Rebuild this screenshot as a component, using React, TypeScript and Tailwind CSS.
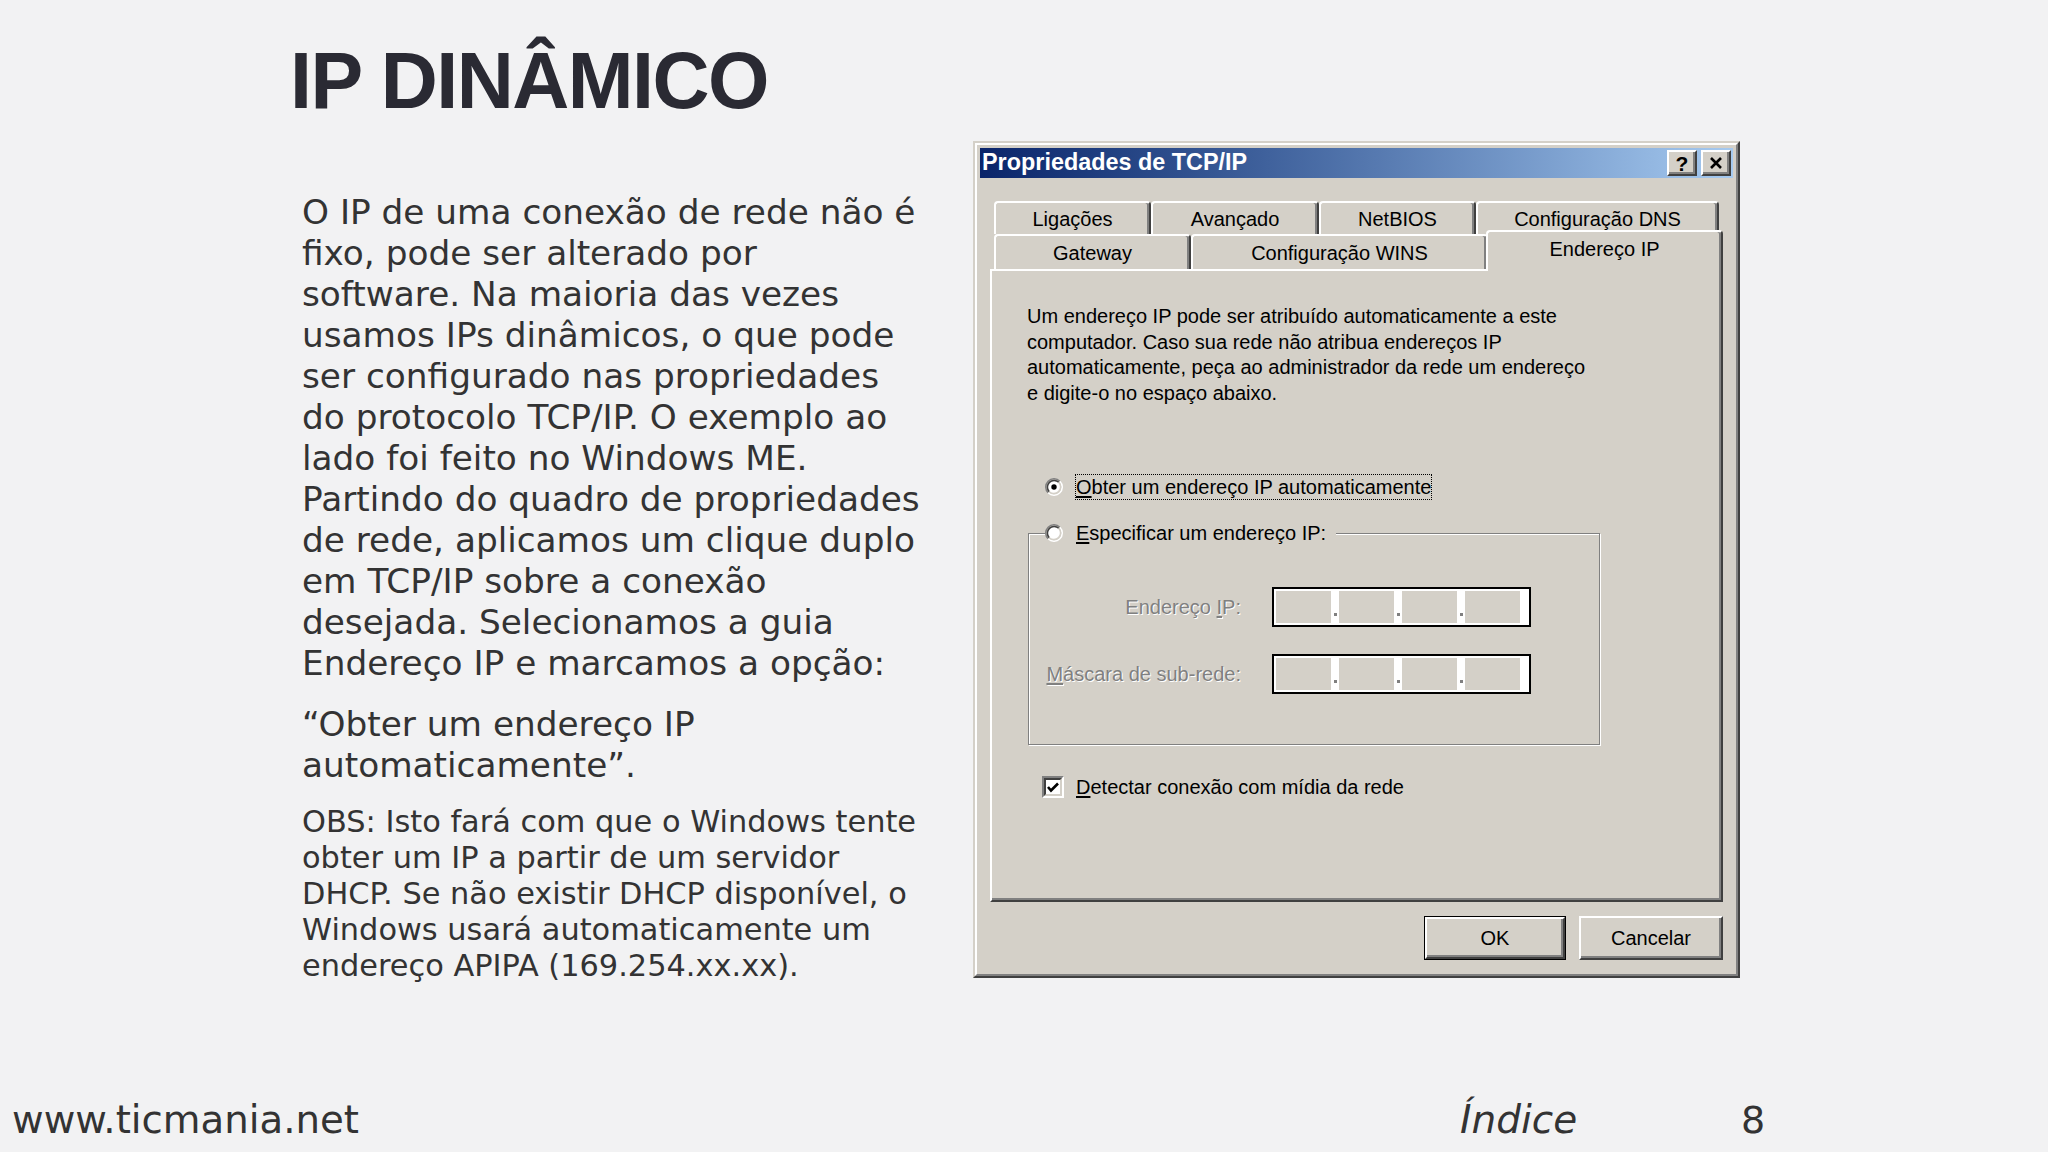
import React from 'react';

const win = "font-['Liberation_Sans',Arial,sans-serif]";
const body = "font-['DejaVu_Sans',Verdana,sans-serif]";

// Win2000-style raised edge
const raised =
  'border-2 border-t-white border-l-white border-r-[#404040] border-b-[#404040] shadow-[inset_-2px_-2px_0_#808080]';

const tabBase =
  'flex items-center justify-center bg-[#d4d0c8] border-t-2 border-l-2 border-r-2 border-t-white border-l-white border-r-[#404040] rounded-t-[4px] shadow-[inset_-2px_0_0_#808080] whitespace-nowrap';

const paragraph = [
  'O IP de uma conexão de rede não é',
  'fixo, pode ser alterado por',
  'software. Na maioria das vezes',
  'usamos IPs dinâmicos, o que pode',
  'ser configurado nas propriedades',
  'do protocolo TCP/IP. O exemplo ao',
  'lado foi feito no Windows ME.',
  'Partindo do quadro de propriedades',
  'de rede, aplicamos um clique duplo',
  'em TCP/IP sobre a conexão',
  'desejada. Selecionamos a guia',
  'Endereço IP e marcamos a opção:',
];

const obs = [
  'OBS: Isto fará com que o Windows tente',
  'obter um IP a partir de um servidor',
  'DHCP. Se não existir DHCP disponível, o',
  'Windows usará automaticamente um',
  'endereço APIPA (169.254.xx.xx).',
];

const dialogText = [
  'Um endereço IP pode ser atribuído automaticamente a este',
  'computador. Caso sua rede não atribua endereços IP',
  'automaticamente, peça ao administrador da rede um endereço',
  'e digite-o no espaço abaixo.',
];

function Radio({ checked = false }: { checked?: boolean }) {
  return (
    <svg width="18" height="18" viewBox="0 0 12 12" className="shrink-0">
      <circle cx="6" cy="6" r="4.2" fill="#fff" />
      <path d="M2.11 9.89 A5.5 5.5 0 0 1 9.89 2.11" fill="none" stroke="#808080" strokeWidth="1" />
      <path d="M9.89 2.11 A5.5 5.5 0 0 1 2.11 9.89" fill="none" stroke="#fff" strokeWidth="1" />
      <path d="M2.82 9.18 A4.5 4.5 0 0 1 9.18 2.82" fill="none" stroke="#404040" strokeWidth="1" />
      <path d="M9.18 2.82 A4.5 4.5 0 0 1 2.82 9.18" fill="none" stroke="#d4d0c8" strokeWidth="1" />
      {checked && <circle cx="6" cy="6" r="1.8" fill="#000" />}
    </svg>
  );
}

function IpBox() {
  return (
    <div className="ml-[31px] flex h-[40px] w-[259px] border-2 border-black bg-white p-[2px]">
      {[0, 1, 2, 3].map((i) => (
        <React.Fragment key={i}>
          {i > 0 && (
            <div className="flex w-[8px] items-end justify-center pb-[7px]">
              <div className="h-[3px] w-[3px] bg-[#808080]" />
            </div>
          )}
          <div className="h-full w-[55px] bg-[#d4d0c8]" />
        </React.Fragment>
      ))}
    </div>
  );
}

function Dialog() {
  return (
    <div className="w-[767px] shrink-0 border-2 border-t-[#d4d0c8] border-l-[#d4d0c8] border-r-[#404040] border-b-[#404040] bg-[#d4d0c8]">
      <div className={`border-2 border-t-white border-l-white border-r-[#808080] border-b-[#808080] p-[3px] ${win} text-black`}>
        {/* title bar */}
        <div className="flex h-[30px] items-center bg-gradient-to-r from-[#0a246a] to-[#a6caf0] pl-[2px] pr-[2px]">
          <span className="text-[23.4px] font-bold leading-none text-white">Propriedades de TCP/IP</span>
          <div className="ml-auto flex gap-[4px]">
            <div className={`flex h-[26px] w-[30px] items-center justify-center bg-[#d4d0c8] ${raised}`}>
              <span className="text-[21px] font-bold leading-none">?</span>
            </div>
            <div className={`flex h-[26px] w-[30px] items-center justify-center bg-[#d4d0c8] ${raised}`}>
              <svg width="14" height="12" viewBox="0 0 14 12">
                <path d="M2 1 L12 11 M12 1 L2 11" stroke="#000" strokeWidth="2.6" />
              </svg>
            </div>
          </div>
        </div>

        <div className="pl-[10px]">
          {/* tabs */}
          <div className="mt-[23px] ml-[4px] flex h-[33px] text-[20px]">
            <div className={`${tabBase} w-[157px]`}>Ligações</div>
            <div className={`${tabBase} w-[168px]`}>Avançado</div>
            <div className={`${tabBase} w-[157px]`}>NetBIOS</div>
            <div className={`${tabBase} w-[243px]`}>Configuração DNS</div>
          </div>
          <div className="ml-[4px] flex h-[35px] items-start text-[20px]">
            <div className={`${tabBase} h-[35px] w-[197px]`}>Gateway</div>
            <div className={`${tabBase} h-[35px] w-[297px]`}>Configuração WINS</div>
            <div className={`${tabBase} relative z-10 -mx-[2px] -mt-[4px] h-[41px] w-[237px] pb-[6px]`}>Endereço IP</div>
          </div>

          {/* panel */}
          <div className={`h-[633px] w-[733px] bg-[#d4d0c8] text-[20px] ${raised}`}>
            <div className="pl-[35px] pt-[33px] leading-[25.5px]">
              {dialogText.map((l) => (
                <div key={l} className="whitespace-nowrap">{l}</div>
              ))}
            </div>

            <div className="mt-[67px] ml-[53px] flex h-[28px] items-center">
              <Radio checked />
              <span className="ml-[12px] whitespace-nowrap border border-dotted border-black leading-[24px]">
                <span className="underline underline-offset-2">O</span>bter um endereço IP automaticamente
              </span>
            </div>

            <fieldset className="mt-[18px] ml-[36px] w-[572px] border border-[#808080] pb-[50px] shadow-[inset_1px_1px_0_#fff,1px_1px_0_#fff]">
              <legend className="ml-[16px] bg-[#d4d0c8] pr-[9px]">
                <div className="flex h-[28px] items-center">
                  <Radio />
                  <span className="ml-[12px] whitespace-nowrap border border-transparent leading-[24px]">
                    <span className="underline underline-offset-2">E</span>specificar um endereço IP:
                  </span>
                </div>
              </legend>
              <div className="mt-[40px] flex items-center">
                <div className="w-[212px] text-right whitespace-nowrap text-[#808080] [text-shadow:1px_1px_0_#fff]">
                  Endereço <span className="underline underline-offset-2">I</span>P:
                </div>
                <IpBox />
              </div>
              <div className="mt-[27px] flex items-center">
                <div className="w-[212px] text-right whitespace-nowrap text-[#808080] [text-shadow:1px_1px_0_#fff]">
                  <span className="underline underline-offset-2">M</span>áscara de sub-rede:
                </div>
                <IpBox />
              </div>
            </fieldset>

            <div className="mt-[31px] ml-[50px] flex h-[22px] items-center">
              <div className="h-[22px] w-[22px] border-2 border-t-[#808080] border-l-[#808080] border-b-white border-r-white">
                <div className="flex h-full w-full items-center justify-center border-2 border-t-[#404040] border-l-[#404040] border-b-[#d4d0c8] border-r-[#d4d0c8] bg-white">
                  <svg width="12" height="11" viewBox="0 0 12 11">
                    <path d="M1 5 L4 8.5 L11 1.5" fill="none" stroke="#000" strokeWidth="2.6" />
                  </svg>
                </div>
              </div>
              <span className="ml-[12px] whitespace-nowrap">
                <span className="underline underline-offset-2">D</span>etectar conexão com mídia da rede
              </span>
            </div>
          </div>

          {/* buttons */}
          <div className="mt-[14px] mb-[11px] flex w-[733px] justify-end gap-[13px] text-[20px]">
            <div className="h-[44px] w-[142px] border border-black">
              <div className={`flex h-full w-full items-center justify-center bg-[#d4d0c8] ${raised}`}>OK</div>
            </div>
            <div className={`flex h-[44px] w-[144px] items-center justify-center bg-[#d4d0c8] ${raised}`}>Cancelar</div>
          </div>
        </div>
      </div>
    </div>
  );
}

export default function App() {
  return (
    <div className="flex h-[1152px] w-[2048px] flex-col overflow-hidden bg-[#f2f2f3] pb-[8px]">
      <h1 className="pl-[290px] pt-[41px] font-['Liberation_Sans',Arial,sans-serif] text-[79px] font-bold leading-[80px] tracking-[-1.5px] text-[#2a2a33]">
        IP DINÂMICO
      </h1>

      <div className="mt-[20px] flex items-start">
        <div className={`w-[973px] shrink-0 pl-[302px] pt-[51px] text-[#333333] ${body}`}>
          <div className="text-[34.3px] leading-[41px]">
            {paragraph.map((l) => (
              <div key={l} className="whitespace-nowrap">{l}</div>
            ))}
          </div>
          <div className="mt-[20px] text-[34.3px] leading-[41px]">
            <div className="whitespace-nowrap">“Obter um endereço IP</div>
            <div className="whitespace-nowrap">automaticamente”.</div>
          </div>
          <div className="mt-[18px] text-[30.4px] leading-[36px]">
            {obs.map((l) => (
              <div key={l} className="whitespace-nowrap">{l}</div>
            ))}
          </div>
        </div>
        <Dialog />
      </div>

      <div className={`mt-auto flex h-[48px] items-center text-[#333333] ${body}`}>
        <div className="w-[1460px] shrink-0 pl-[12px] text-[38.7px]">www.ticmania.net</div>
        <div className="w-[281px] shrink-0 text-[39px] italic">Índice</div>
        <div className="text-[38px]">8</div>
      </div>
    </div>
  );
}
